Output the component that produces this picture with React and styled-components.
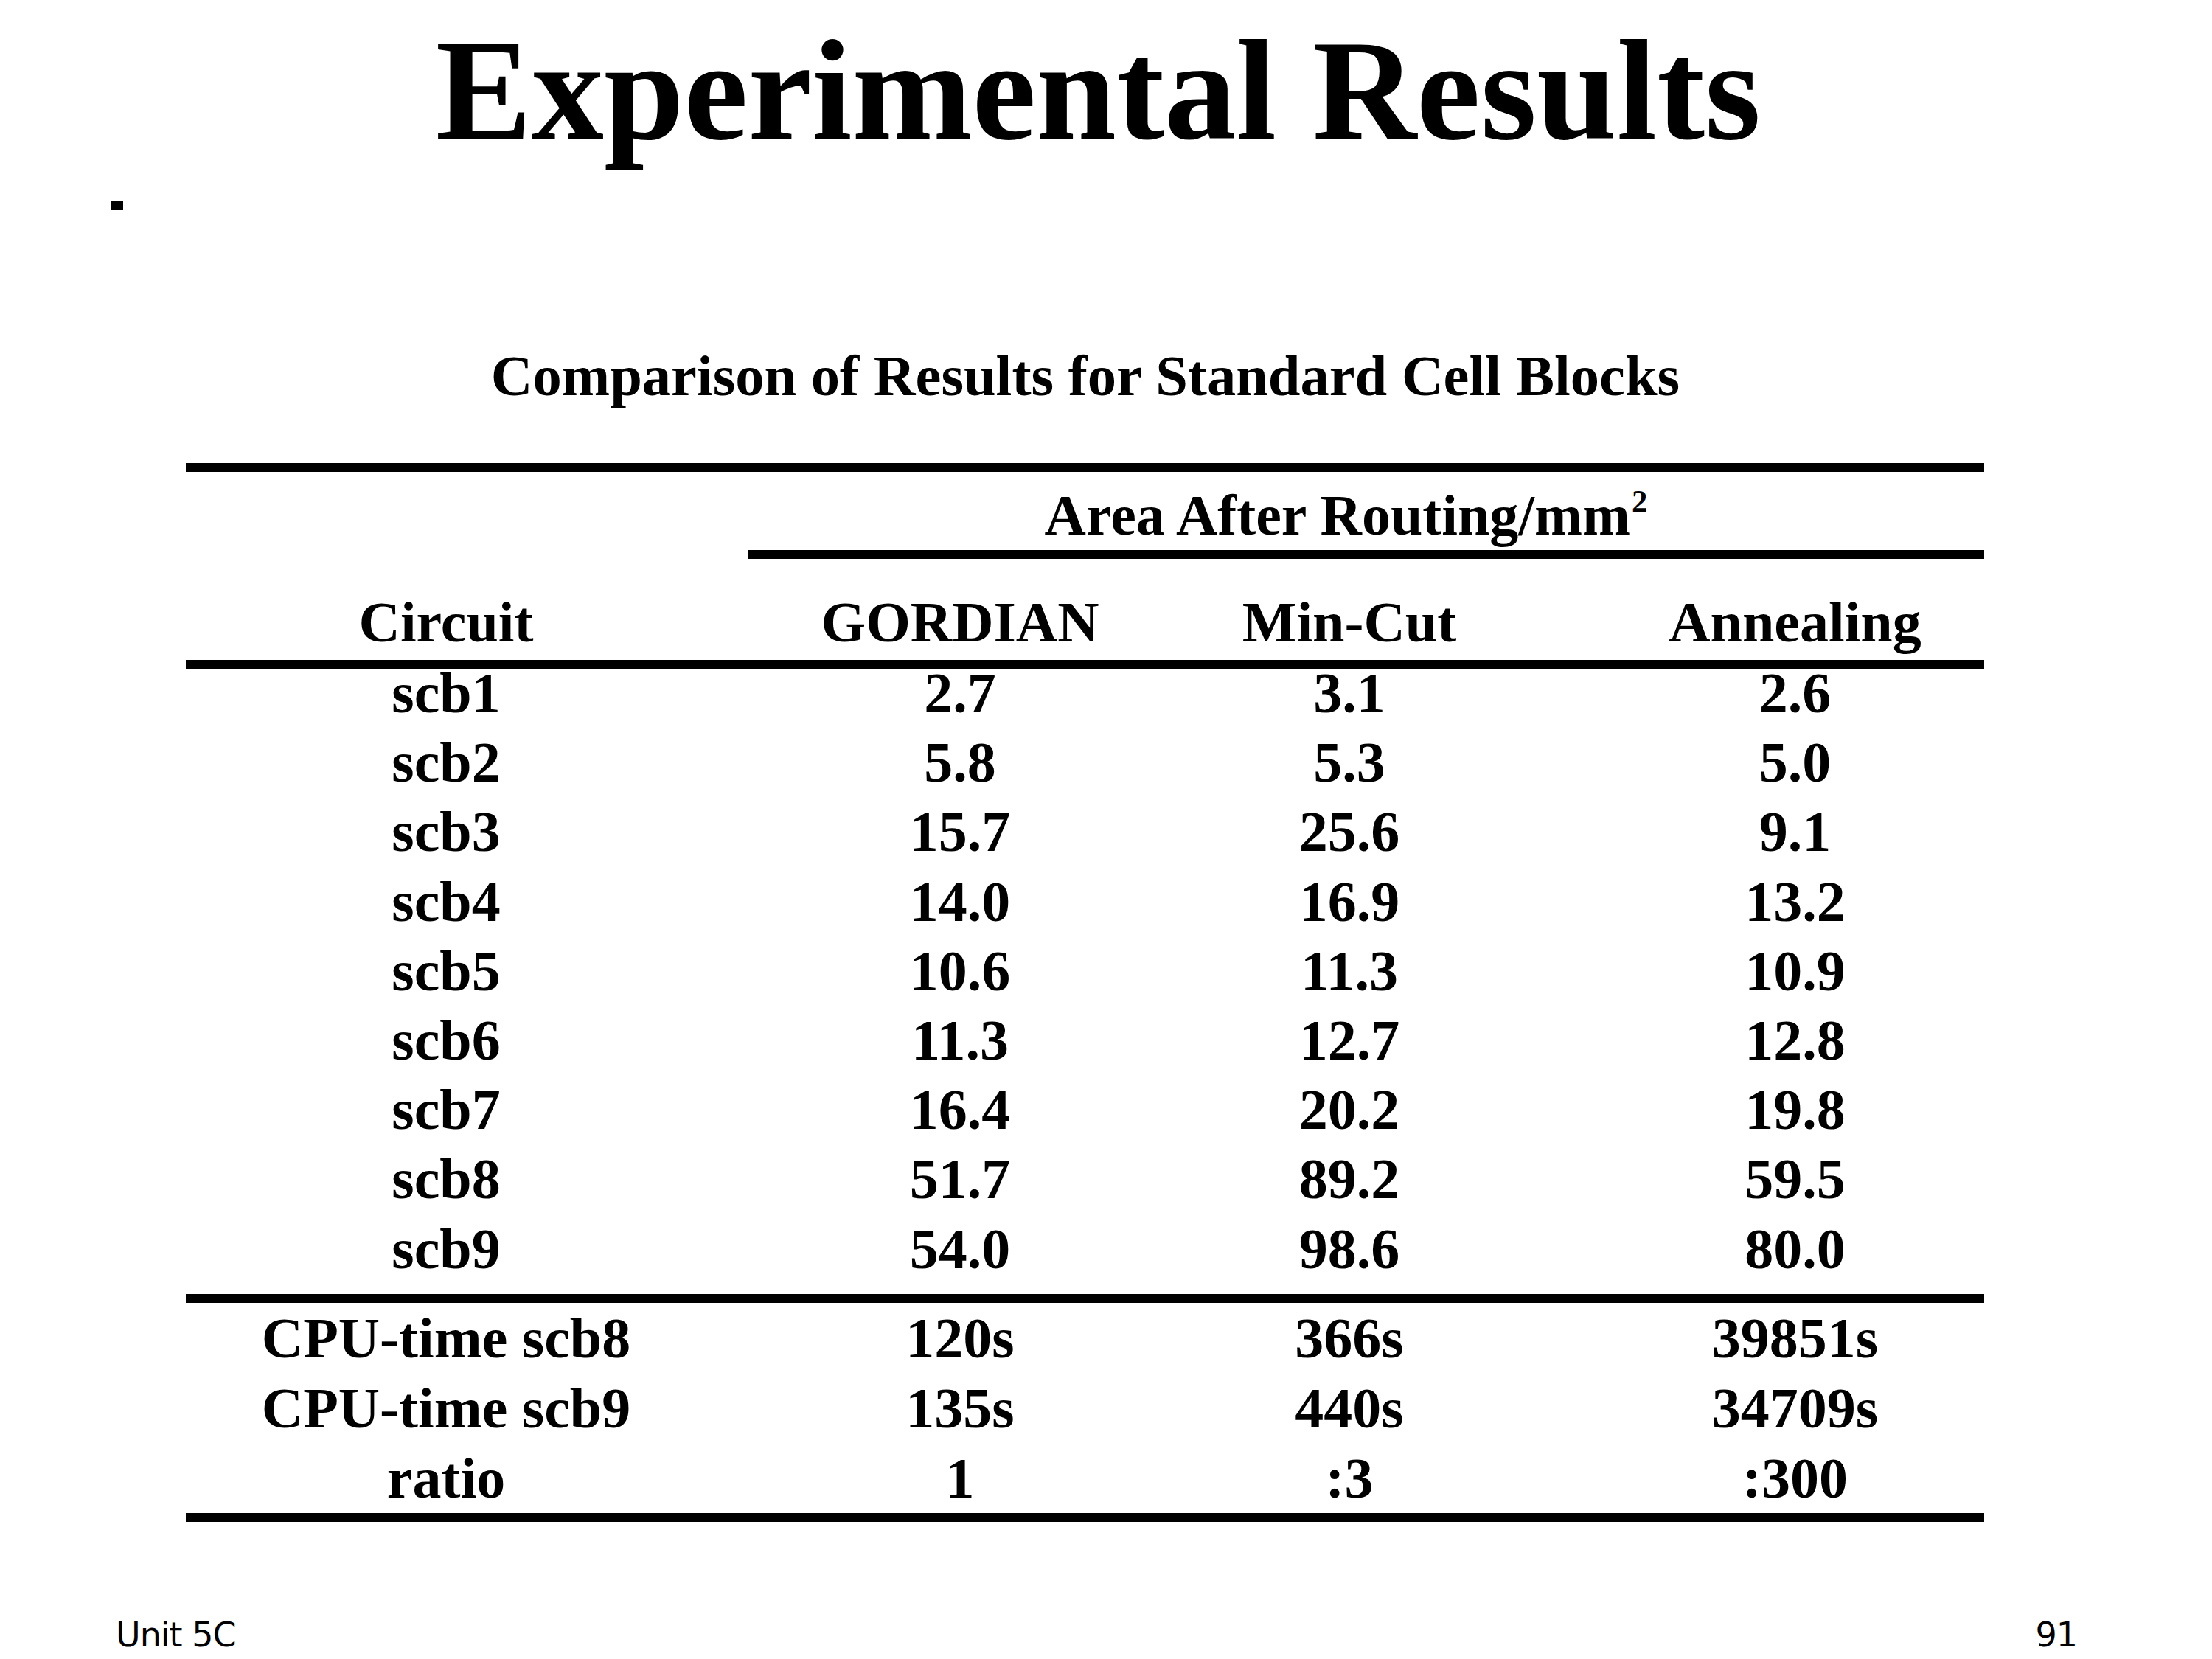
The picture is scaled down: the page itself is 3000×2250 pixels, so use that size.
import React from "react";
import styled, { createGlobalStyle } from "styled-components";

const rows = [
  ["scb1", "2.7", "3.1", "2.6"],
  ["scb2", "5.8", "5.3", "5.0"],
  ["scb3", "15.7", "25.6", "9.1"],
  ["scb4", "14.0", "16.9", "13.2"],
  ["scb5", "10.6", "11.3", "10.9"],
  ["scb6", "11.3", "12.7", "12.8"],
  ["scb7", "16.4", "20.2", "19.8"],
  ["scb8", "51.7", "89.2", "59.5"],
  ["scb9", "54.0", "98.6", "80.0"],
];

const cpuRows = [
  ["CPU-time scb8", "120s", "366s", "39851s"],
  ["CPU-time scb9", "135s", "440s", "34709s"],
  ["ratio", "1", ":3", ":300"],
];

const App = () => {
  return (
    <>
      <GlobalStyle />
      <Slide>
        <Title>Experimental Results</Title>
        <Bullet />
        <Subtitle>Comparison of Results for Standard Cell Blocks</Subtitle>

        <Table>
          <SpanRow>
            Area After Routing/mm<Sup>2</Sup>
          </SpanRow>

          <HeadRow>
            <Cell>Circuit</Cell>
            <Cell>GORDIAN</Cell>
            <Cell>Min-Cut</Cell>
            <Cell>Annealing</Cell>
          </HeadRow>

          <Body $rule>
            {rows.map((r) => (
              <Row key={r[0]} $height="94.2px" $line="66px">
                {r.map((v, i) => (
                  <Cell key={i}>{v}</Cell>
                ))}
              </Row>
            ))}
          </Body>

          <Body>
            {cpuRows.map((r) => (
              <Row key={r[0]} $height="95px" $line="95px">
                {r.map((v, i) => (
                  <Cell key={i}>{v}</Cell>
                ))}
              </Row>
            ))}
          </Body>
        </Table>

        <Footer>
          <span>Unit 5C</span>
          <span>91</span>
        </Footer>
      </Slide>
    </>
  );
};

export default App;

/* ========= CSS STYLED COMPONENTS ========= */

const GlobalStyle = createGlobalStyle`
    html, body {
        margin: 0;
        padding: 0;
        background: #fff;
    }

    body {
        font-family: "Liberation Serif", "Times New Roman", serif;
        color: #000;
    }
`;

const Slide = styled.div`
    width: 3000px;
    height: 2250px;
    display: flex;
    flex-direction: column;
    box-sizing: border-box;
    overflow: hidden;
    background: #fff;
`;

const Title = styled.h1`
    margin: 0;
    padding: 24px 21px 0 0;
    font-size: 195.5px;
    line-height: 197px;
    font-weight: 700;
    text-align: center;
    white-space: nowrap;
`;

const Bullet = styled.div`
    width: 17px;
    height: 12px;
    margin: 52px 0 0 150px;
    background: #000;
`;

const Subtitle = styled.h2`
    margin: 175px 0 0;
    padding-right: 56px;
    font-size: 78.5px;
    line-height: 100px;
    font-weight: 700;
    text-align: center;
    white-space: nowrap;
`;

const Table = styled.div`
    width: 2439px;
    margin: 68px 0 0 252px;
    border-top: 12px solid #000;
    border-bottom: 12px solid #000;
    font-size: 78px;
    font-weight: 700;
`;

const SpanRow = styled.div`
    margin-left: 762px;
    padding: 12px 54px 0 0;
    line-height: 94px;
    text-align: center;
    white-space: nowrap;
    border-bottom: 12px solid #000;
`;

const Sup = styled.sup`
    font-size: 0.55em;
    line-height: 0;
    vertical-align: 0.72em;
    margin-left: 2px;
`;

const Row = styled.div`
    display: grid;
    grid-template-columns: 706px 688px 368px 1fr;
    height: ${(p) => p.$height || "auto"};
    line-height: ${(p) => p.$line || "normal"};

    > :nth-child(4) {
        padding-left: 164px;
    }
`;

const HeadRow = styled(Row)`
    padding-top: 35px;
    line-height: 102px;
    border-bottom: 12px solid #000;
`;

const Body = styled.div`
    border-bottom: ${(p) => (p.$rule ? "12px solid #000" : "none")};
`;

const Cell = styled.div`
    text-align: center;
    white-space: nowrap;
`;

const Footer = styled.div`
    margin-top: auto;
    display: flex;
    justify-content: space-between;
    padding: 0 183px 10px 157px;
    font-family: "DejaVu Sans", Verdana, sans-serif;
    font-size: 46px;
    line-height: 46px;
    letter-spacing: -1px;
`;
